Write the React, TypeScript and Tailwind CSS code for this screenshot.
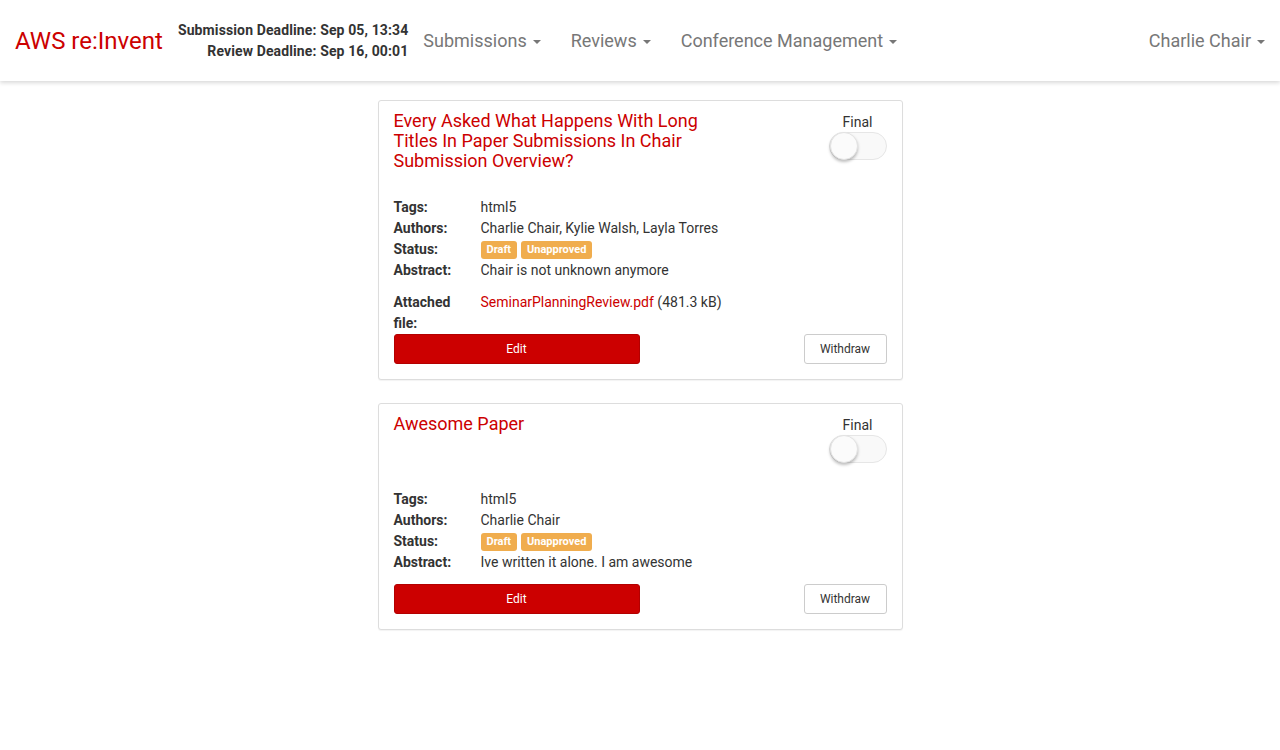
import React from "react";

const Caret = () => (
  <span className="ml-[6px] inline-block h-0 w-0 border-x-[4px] border-t-[4px] border-x-transparent border-t-[#777] align-middle" />
);

const Toggle = () => (
  <div className="relative h-[28px] w-[58px] rounded-full border border-[#e6e6e6] bg-[#f9f9f9]">
    <div className="absolute left-0 top-[-1px] h-[28px] w-[28px] rounded-full border border-[#e3e3e3] bg-[#fbfbfb] shadow-[0_2px_3px_rgba(0,0,0,0.25)]" />
  </div>
);

const Badge = ({ children }: { children: React.ReactNode }) => (
  <span className="inline-block rounded-[3px] bg-[#f0ad4e] px-[6px] text-[11px] font-bold leading-[18px] text-white">
    {children}
  </span>
);

const Row = ({ label, children }: { label: React.ReactNode; children: React.ReactNode }) => (
  <div className="flex text-[14px] leading-[21px]">
    <div className="w-[87px] shrink-0 font-bold text-[#333]">{label}</div>
    <div className="text-[#333]">{children}</div>
  </div>
);

type Paper = {
  title: string;
  authors: string;
  abstract: string;
  file?: { name: string; size: string };
};

const Card = ({ p }: { p: Paper }) => (
  <div className="rounded-[3px] border border-[#ddd] bg-white px-[15px] pb-[15px] pt-[9px] shadow-[0_1px_1px_rgba(0,0,0,0.05)]">
    <div className="flex justify-between">
      <div className="w-[330px] pt-[1px] text-[18px] leading-[20px] text-[#cc0000]">{p.title}</div>
      <div className="flex flex-col items-center pt-[2px]">
        <div className="text-[14px] leading-[20px] text-[#333]">Final</div>
        <Toggle />
      </div>
    </div>
    <div className="mt-[26px]">
      <Row label="Tags:">html5</Row>
      <Row label="Authors:">{p.authors}</Row>
      <Row label="Status:">
        <div className="flex h-[21px] items-center gap-[4px] pt-[1px]">
          <Badge>Draft</Badge>
          <Badge>Unapproved</Badge>
        </div>
      </Row>
      <Row label="Abstract:">{p.abstract}</Row>
      {p.file && (
        <div className="mt-[11px]">
          <Row label={<span className="block w-[66px]">Attached file:</span>}>
            <span className="text-[#cc0000]">{p.file.name}</span> ({p.file.size})
          </Row>
        </div>
      )}
    </div>
    <div className={`flex items-center justify-between ${p.file ? "mt-0" : "mt-[11px]"}`}>
      <button className="h-[30px] w-[246px] rounded-[3px] border border-[#b30000] bg-[#cc0000] text-[12px] text-white">
        Edit
      </button>
      <button className="h-[30px] w-[83px] rounded-[3px] border border-[#ccc] bg-white text-[12px] text-[#333]">
        Withdraw
      </button>
    </div>
  </div>
);

const papers: Paper[] = [
  {
    title: "Every Asked What Happens With Long Titles In Paper Submissions In Chair Submission Overview?",
    authors: "Charlie Chair, Kylie Walsh, Layla Torres",
    abstract: "Chair is not unknown anymore",
    file: { name: "SeminarPlanningReview.pdf", size: "481.3 kB" },
  },
  {
    title: "Awesome Paper",
    authors: "Charlie Chair",
    abstract: "Ive written it alone. I am awesome",
  },
];

export default function App() {
  return (
    <div className="min-h-[750px] bg-white" style={{ fontFamily: "Roboto, 'Liberation Sans', sans-serif" }}>
      <header className="flex h-[81px] items-center bg-white px-[15px] shadow-[0_2px_4px_rgba(0,0,0,0.15)]">
        <div className="text-[24px] leading-[30px] text-[#cc0000]">AWS re:Invent</div>
        <div className="ml-[15px] text-right text-[14px] font-bold leading-[21px] tracking-[0.12px] text-[#333]">
          <div>Submission Deadline: Sep 05, 13:34</div>
          <div>Review Deadline: Sep 16, 00:01</div>
        </div>
        <nav className="flex text-[18px] text-[#777]">
          <div className="px-[15px]">Submissions<Caret /></div>
          <div className="px-[15px]">Reviews<Caret /></div>
          <div className="px-[15px]">Conference Management<Caret /></div>
        </nav>
        <div className="ml-auto text-[18px] text-[#777]">Charlie Chair<Caret /></div>
      </header>
      <main className="mx-auto mt-[19px] flex w-[525px] flex-col gap-[23px]">
        {papers.map((p, i) => (
          <Card key={i} p={p} />
        ))}
      </main>
    </div>
  );
}
